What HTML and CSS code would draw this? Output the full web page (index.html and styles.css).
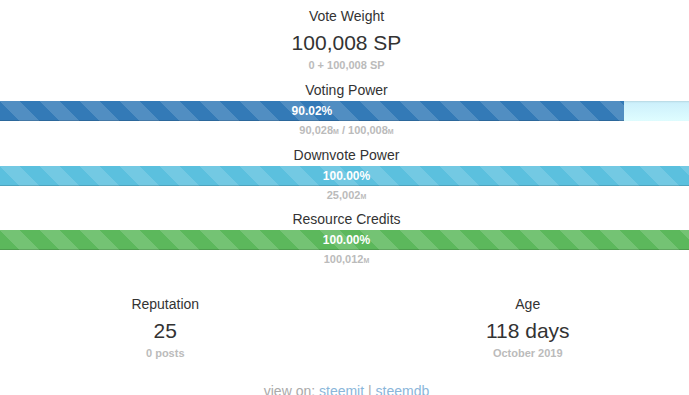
FILE: index.html
```html
<!DOCTYPE html>
<html>
<head>
    <title>Account Stats</title>
    <link rel="stylesheet" href="styles.css">
</head>
<body>
    <div class="page">
        <div class="stat">
            <div class="stat-label">Vote Weight</div>
            <div class="stat-value">100,008 SP</div>
            <div class="stat-sub">0 + 100,008 SP</div>
        </div>

        <div class="meter">
            <div class="meter-label">Voting Power</div>
            <div class="progress">
                <div class="progress-bar bar-primary" style="width: 90.02%">90.02%</div>
            </div>
            <div class="meter-sub">90,028<small>M</small> / 100,008<small>M</small></div>
        </div>

        <div class="meter">
            <div class="meter-label">Downvote Power</div>
            <div class="progress">
                <div class="progress-bar bar-info" style="width: 100%">100.00%</div>
            </div>
            <div class="meter-sub">25,002<small>M</small></div>
        </div>

        <div class="meter">
            <div class="meter-label">Resource Credits</div>
            <div class="progress">
                <div class="progress-bar bar-success" style="width: 100%">100.00%</div>
            </div>
            <div class="meter-sub">100,012<small>M</small></div>
        </div>

        <div class="row">
            <div class="col">
                <div class="stat">
                    <div class="stat-label">Reputation</div>
                    <div class="stat-value">25</div>
                    <div class="stat-sub">0 posts</div>
                </div>
            </div>
            <div class="col">
                <div class="stat">
                    <div class="stat-label">Age</div>
                    <div class="stat-value">118 days</div>
                    <div class="stat-sub">October 2019</div>
                </div>
            </div>
        </div>

        <div class="links">
            view on: <a href="#">steemit</a> | <a href="#">steemdb</a>
        </div>
    </div>
</body>
</html>
```

FILE: styles.css
```css
html, body {
    overflow: hidden;
}
body {
    margin: 0;
    background-color: #fff;
    color: #333;
    font-family: "Liberation Sans", Arial, sans-serif;
    font-size: 14px;
    line-height: 20px;
}
.page {
    width: 693px;
    text-align: center;
}

/* label / big number / grey note */
.stat {
    padding-top: 6px;
}
.stat-label {
    font-size: 14px;
    line-height: 20px;
}
.stat-value {
    margin-top: 5px;
    font-size: 21px;
    line-height: 24px;
}
.stat-sub {
    margin-top: 1px;
    font-size: 11px;
    line-height: 18px;
    font-weight: bold;
    color: #bbb;
}

/* striped bars */
.meter {
    margin-top: 6px;
    margin-bottom: -0.5px;
}
.meter-label {
    font-size: 14px;
    line-height: 20px;
}
.progress {
    margin-top: 1px;
    height: 20px;
    overflow: hidden;
    background-image: linear-gradient(to bottom, #cbeffb 0, #dffdff 100%);
    box-shadow: inset 0 1px 2px rgba(0, 0, 0, 0.1);
}
.progress-bar {
    height: 100%;
    font-size: 12px;
    font-weight: bold;
    line-height: 20px;
    color: #fff;
    text-align: center;
    box-shadow: inset 0 -1px 0 rgba(0, 0, 0, 0.15);
    background-image: linear-gradient(45deg, rgba(255, 255, 255, 0.15) 25%, transparent 25%, transparent 50%, rgba(255, 255, 255, 0.15) 50%, rgba(255, 255, 255, 0.15) 75%, transparent 75%, transparent);
    background-size: 40px 40px;
}
.bar-primary {
    background-color: #337ab7;
}
.bar-info {
    background-color: #5bc0de;
}
.bar-success {
    background-color: #5cb85c;
}
.meter-sub {
    font-size: 11px;
    line-height: 18px;
    font-weight: bold;
    color: #bbb;
}
.meter-sub small {
    font-size: 7px;
    line-height: 0;
}

/* two columns */
.row {
    display: flex;
    margin: 20px -16px 0;
}
.col {
    flex: 1;
}

.links {
    margin-top: 19px;
    color: #aaa;
}
.links a {
    color: #8ab6da;
    text-decoration: none;
}
```
